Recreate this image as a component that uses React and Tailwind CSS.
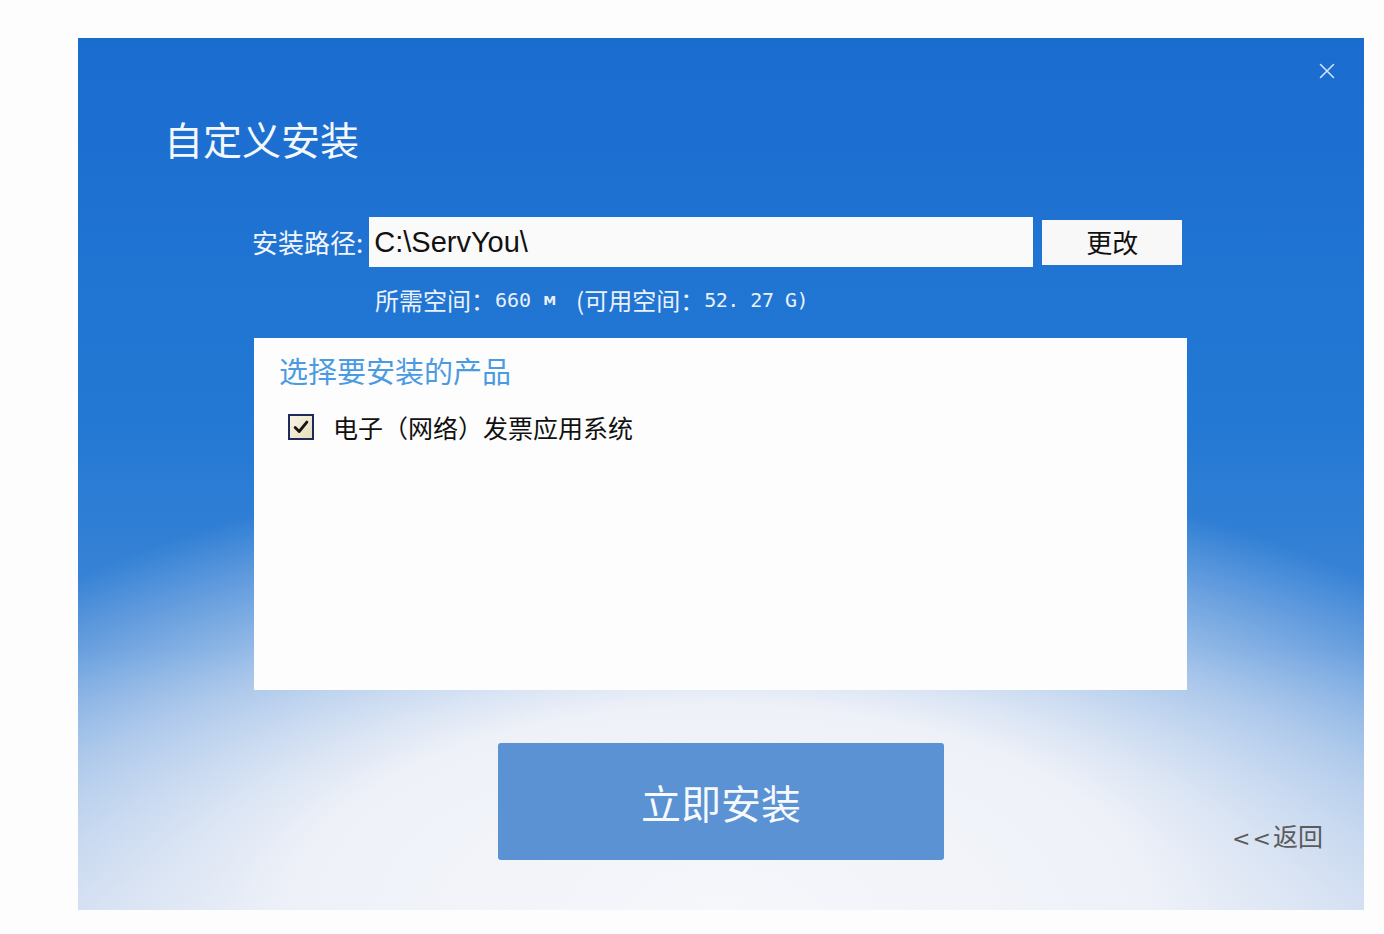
import { X } from 'lucide-react'

const cjk = "font-['Noto_Sans_CJK_SC','Noto_Sans',sans-serif]"

function CheckBox() {
  return (
    <span className="flex h-[26px] w-[26px] shrink-0 items-center justify-center border-2 border-[#1f2b5e] bg-[linear-gradient(135deg,#f7f4e4_0%,#e6dfbd_100%)]">
      <svg viewBox="0 0 20 20" className="h-[18px] w-[18px]">
        <path d="M3.5 10.5 L8 15 L16.5 4.5" fill="none" stroke="#161616" strokeWidth="3.2" strokeLinecap="round" strokeLinejoin="round" />
      </svg>
    </span>
  )
}

export default function App() {
  return (
    <div className={`min-h-[934px] w-[1384px] bg-[#fdfdfd] pt-[38px] ${cjk}`}>
      <div className="relative ml-[78px] flex h-[872px] w-[1286px] flex-col bg-[radial-gradient(ellipse_74%_52%_at_50%_100%,#f6f7fb_0%,#eef1f8_45%,rgba(226,233,246,0.6)_72%,rgba(226,233,246,0)_100%),linear-gradient(180deg,#1a6ccf_0%,#2479d4_45%,#3f86d6_70%,#b4cbea_100%)]">
        {/* close */}
        <button className="absolute right-[24px] top-[20px] text-[#d4e3f6]">
          <X className="h-[26px] w-[26px]" strokeWidth={1.4} />
        </button>

        {/* title */}
        <h1 className="ml-[86px] mt-[81px] text-[39px] font-normal leading-none text-[#f4f8fd]">
          自定义安装
        </h1>

        {/* install path */}
        <div className="ml-[174px] mt-[59px] flex items-center">
          <span className="text-[26px] leading-none text-[#f2f6fc]">安装路径:</span>
          <div className="ml-[6px] flex h-[50px] w-[664px] items-center bg-[#fafafa] pl-[5px]">
            <span className="font-['Liberation_Sans',sans-serif] text-[29px] leading-none text-[#111]">C:\ServYou\</span>
          </div>
          <button className="ml-[9px] flex h-[45px] w-[140px] items-center justify-center bg-[#f8f8f8] text-[26px] leading-none text-[#111]">
            更改
          </button>
        </div>

        {/* disk space */}
        <div className="ml-[297px] mt-[21px] flex items-center text-[24px] leading-none text-[#eaf1fb]">
          <span>所需空间：</span>
          <span className="font-['DejaVu_Sans_Mono',monospace] text-[20px]">660</span>
          <span className="ml-[12px] font-['DejaVu_Sans',sans-serif] text-[13px] font-bold">M</span>
          <span className="ml-[20px]">(可用空间：</span>
          <span className="font-['DejaVu_Sans_Mono',monospace] text-[20px] tracking-[-0.5px]">52. 27 G)</span>
        </div>

        {/* product panel */}
        <div className="ml-[176px] mt-[26px] h-[352px] w-[933px] bg-[#fdfdfd] pl-[25px] pt-[18px]">
          <div className="text-[29px] leading-none text-[#4b9be2]">选择要安装的产品</div>
          <label className="ml-[9px] mt-[29px] flex items-center gap-[19px]">
            <CheckBox />
            <span className="text-[25px] leading-none text-[#111]">电子（网络）发票应用系统</span>
          </label>
        </div>

        {/* actions */}
        <div className="mt-[53px] grid grid-cols-[1fr_auto_1fr]">
          <div />
          <button className="flex h-[117px] w-[446px] items-center justify-center rounded-[3px] bg-[#5a92d3] text-[40px] leading-none text-[#f6f9fd]">
            立即安装
          </button>
          <div className="flex items-end justify-end pb-[10px] pr-[41px]">
            <button className="text-[25px] leading-none text-[#5b5b5b]">
              <span className="font-['DejaVu_Sans',sans-serif] text-[22px] tracking-[2px]">&lt;&lt;</span>返回
            </button>
          </div>
        </div>
      </div>
    </div>
  )
}
